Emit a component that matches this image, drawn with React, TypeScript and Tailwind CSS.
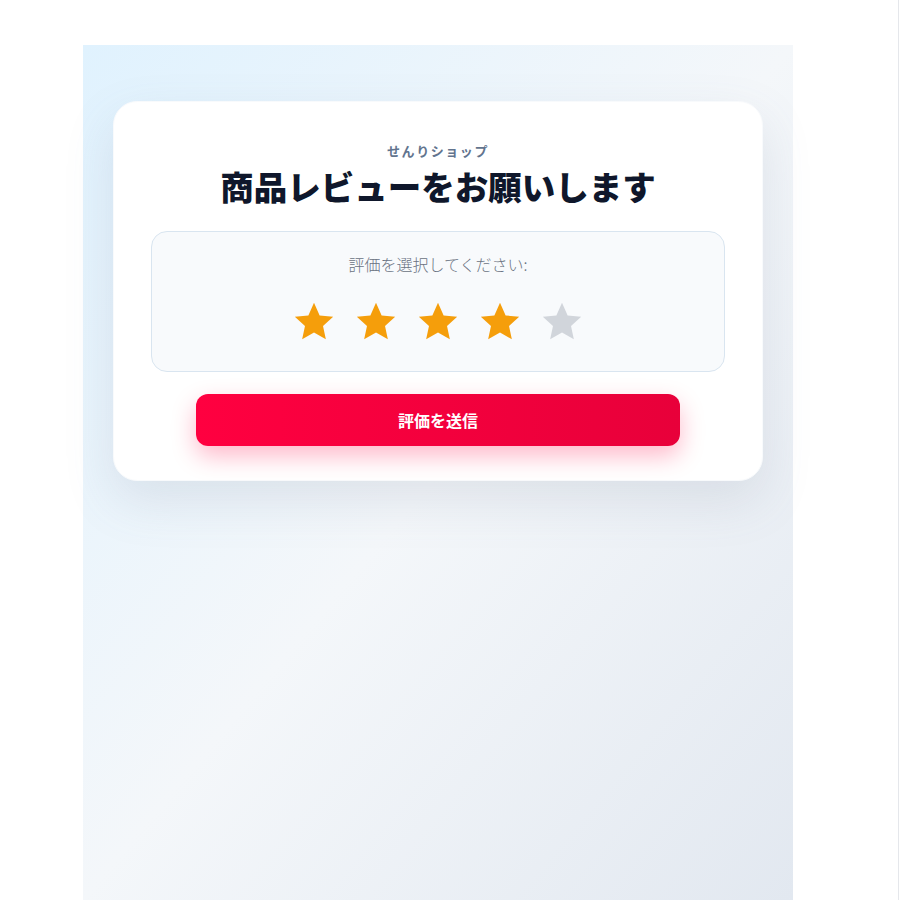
import { useState } from "react";

const jp = { fontFamily: '"Noto Sans CJK JP", "Noto Sans", sans-serif' };

function Star({ filled }: { filled: boolean }) {
  return (
    <svg viewBox="0 0 24 24" className="w-[46px] h-[46px]">
      <polygon
        points="12,2 14.94,8.56 22,9.27 16.7,14.04 18.18,21.02 12,17.45 5.82,21.02 7.3,14.04 2,9.27 9.06,8.56"
        fill={filled ? "#f59e0b" : "#d1d5db"}
      />
    </svg>
  );
}

export default function App() {
  const [rating, setRating] = useState(4);

  return (
    <div className="w-[899px] min-h-[900px] bg-white border-r border-gray-200 pt-[45px] pl-[83px]" style={jp}>
      <div className="w-[710px] min-h-[855px] bg-gradient-to-br from-[#e0f2fe] via-[#f4f7fa] to-[#e2e8f0] px-[30px] pt-14">
        <div className="bg-white rounded-3xl border border-slate-50 shadow-[0_20px_50px_rgba(100,116,139,0.15)] px-[37px] pt-[39px] pb-[34px]">
          <p className="text-center text-[13px] leading-5 font-bold tracking-[0.12em] text-slate-500">
            せんりショップ
          </p>
          <h1 className="mt-1 text-center text-[33.5px] leading-[42px] font-black text-slate-900">
            商品レビューをお願いします
          </h1>

          <div className="mt-[24px] rounded-2xl border border-[#d9e5f0] bg-slate-50 px-6 pt-5 pb-[26px]">
            <p className="text-center text-base leading-6 font-light text-gray-500">
              評価を選択してください:
            </p>
            <div className="mt-[23px] flex justify-center gap-4">
              {[1, 2, 3, 4, 5].map((n) => (
                <button key={n} type="button" onClick={() => setRating(n)} className="block">
                  <Star filled={n <= rating} />
                </button>
              ))}
            </div>
          </div>

          <button
            type="button"
            className="mt-[22px] mx-auto block w-[484px] h-[52px] rounded-xl bg-gradient-to-r from-[#ff0040] to-[#e8003a] text-white text-base font-bold shadow-[0_10px_24px_rgba(255,0,64,0.28)]"
          >
            評価を送信
          </button>
        </div>
      </div>
    </div>
  );
}
